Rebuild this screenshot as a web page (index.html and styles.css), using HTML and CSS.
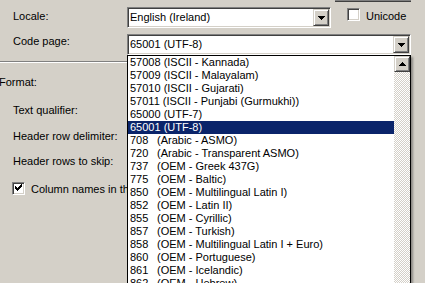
FILE: index.html
```html
<!DOCTYPE html>
<html lang="en">
<head>
  <meta charset="UTF-8">
  <title>Flat File Source Editor</title>
  <link rel="stylesheet" href="styles.css">
</head>
<body>
  <div class="btn-edge"></div>

  <div class="row row-locale">
    <div class="label label-locale">Locale:</div>
    <div class="combo combo-locale">
      <div class="combo-text">English (Ireland)</div>
      <div class="raised combo-btn">
        <svg width="7" height="4" viewBox="0 0 7 4" shape-rendering="crispEdges"><path d="M0 0h7v1h-1v1h-1v1h-1v1h-1v-1h-1v-1h-1v-1h-1z"/></svg>
      </div>
    </div>
    <div class="check-group">
      <div class="checkbox"></div>
      <div class="check-label">Unicode</div>
    </div>
  </div>

  <div class="row row-code">
    <div class="label label-code">Code page:</div>
    <div class="combo combo-code">
      <div class="combo-text">65001 (UTF-8)</div>
      <div class="raised combo-btn">
        <svg width="7" height="4" viewBox="0 0 7 4" shape-rendering="crispEdges"><path d="M0 0h7v1h-1v1h-1v1h-1v1h-1v-1h-1v-1h-1v-1h-1z"/></svg>
      </div>
    </div>
  </div>

  <div class="separator"></div>

  <div class="format-title">Format:</div>
  <div class="field-label fl-qualifier">Text qualifier:</div>
  <div class="field-label fl-delim">Header row delimiter:</div>
  <div class="field-label fl-skip">Header rows to skip:</div>

  <div class="row row-colnames">
    <div class="checkbox">
      <svg width="9" height="9" viewBox="0 0 9 9" shape-rendering="crispEdges"><path d="M1 2h1v3h-1zM2 3h1v3h-1zM3 4h1v3h-1zM4 3h1v3h-1zM5 2h1v3h-1zM6 1h1v3h-1zM7 0h1v3h-1z"/></svg>
    </div>
    <div class="check-label">Column names in the first data row</div>
  </div>

  <!-- open drop-down of the code page combo -->
  <div class="dropdown-list">
    <div class="options">
      <div class="opt">57008 (ISCII - Kannada)</div>
      <div class="opt">57009 (ISCII - Malayalam)</div>
      <div class="opt">57010 (ISCII - Gujarati)</div>
      <div class="opt">57011 (ISCII - Punjabi (Gurmukhi))</div>
      <div class="opt">65000 (UTF-7)</div>
      <div class="opt sel">65001 (UTF-8)</div>
      <div class="opt"><span class="code">708</span>(Arabic - ASMO)</div>
      <div class="opt"><span class="code">720</span>(Arabic - Transparent ASMO)</div>
      <div class="opt"><span class="code">737</span>(OEM - Greek 437G)</div>
      <div class="opt"><span class="code">775</span>(OEM - Baltic)</div>
      <div class="opt"><span class="code">850</span>(OEM - Multilingual Latin I)</div>
      <div class="opt"><span class="code">852</span>(OEM - Latin II)</div>
      <div class="opt"><span class="code">855</span>(OEM - Cyrillic)</div>
      <div class="opt"><span class="code">857</span>(OEM - Turkish)</div>
      <div class="opt"><span class="code">858</span>(OEM - Multilingual Latin I + Euro)</div>
      <div class="opt"><span class="code">860</span>(OEM - Portuguese)</div>
      <div class="opt"><span class="code">861</span>(OEM - Icelandic)</div>
      <div class="opt"><span class="code">862</span>(OEM - Hebrew)</div>
    </div>
    <div class="scrollbar">
      <div class="raised scroll-btn">
        <svg width="7" height="4" viewBox="0 0 7 4" shape-rendering="crispEdges"><path d="M3 0h1v1h1v1h1v1h1v1h-7v-1h1v-1h1v-1h1z"/></svg>
      </div>
    </div>
  </div>
</body>
</html>
```

FILE: styles.css
```css
body {
  margin: 0;
  width: 425px;
  height: 283px;
  overflow: hidden;
  position: relative;
  background: #d4d0c8;
  font-family: "Liberation Sans", Arial, sans-serif;
  font-size: 11px;
  line-height: 13px;
  color: #000;
}

/* bottom of a button cut off by the top edge */
.btn-edge {
  margin-left: 335px;
  width: 76px;
  height: 1px;
  background: #808080;
  border-bottom: 1px solid #404040;
}

.row {
  display: flex;
  align-items: flex-start;
}

.row-locale {
  margin-top: 5px;
}

.row-code {
  margin-top: 6px;
}

.label {
  width: 114px;
  padding-left: 13px;
}

.label-locale {
  padding-top: 3px;
}

.label-code {
  padding-top: 1px;
}

/* sunken field */
.combo {
  box-sizing: border-box;
  height: 21px;
  padding: 1px;
  display: flex;
  background: #fff;
  border: 1px solid;
  border-color: #808080 #fff #fff #808080;
  box-shadow: inset 1px 1px #404040, inset -1px -1px #d4d0c8;
}

.combo-locale {
  width: 204px;
}

.combo-code {
  width: 284px;
}

.combo-text {
  flex: 1;
  padding: 2px 0 0 1px;
}

/* raised button */
.raised {
  box-sizing: border-box;
  background: #d4d0c8;
  border: 1px solid;
  border-color: #d4d0c8 #404040 #404040 #d4d0c8;
  box-shadow: inset 1px 1px #fff, inset -1px -1px #808080;
  display: flex;
  align-items: center;
  justify-content: center;
}

.combo-btn {
  width: 16px;
  height: 17px;
}

.check-group {
  display: flex;
  align-items: flex-start;
  margin-left: 16px;
}

.checkbox {
  box-sizing: border-box;
  width: 13px;
  height: 13px;
  margin-top: 1px;
  background: #fff;
  border: 1px solid;
  border-color: #808080 #fff #fff #808080;
  box-shadow: inset 1px 1px #404040, inset -1px -1px #d4d0c8;
  display: flex;
  align-items: center;
  justify-content: center;
}

.check-label {
  margin-left: 6px;
  padding-top: 3px;
  white-space: nowrap;
}

.separator {
  margin-top: 6px;
  width: 127px;
  height: 1px;
  background: #808080;
  border-bottom: 1px solid #fff;
}

.format-title {
  margin-top: 13px;
  margin-left: -1px;
}

.field-label {
  padding-left: 13px;
}

.fl-qualifier {
  margin-top: 15px;
}

.fl-delim {
  margin-top: 13px;
}

.fl-skip {
  margin-top: 12px;
}

.row-colnames {
  margin-top: 13px;
  padding-left: 12px;
}

.row-colnames .check-label {
  padding-top: 2px;
}

/* drop-down list lies over the form */
.dropdown-list {
  position: absolute;
  left: 127px;
  top: 55px;
  width: 284px;
  height: 260px;
  box-sizing: border-box;
  display: flex;
  background: #fff;
  border: 1px solid #000;
  box-shadow: 2px 2px 2px rgba(0, 0, 0, 0.35);
}

.options {
  flex: 1;
}

.opt {
  height: 13px;
  padding-left: 2px;
  white-space: nowrap;
}

.opt.sel {
  background: #0a246a;
  color: #fff;
}

.code {
  display: inline-block;
  width: 27px;
}

.scrollbar {
  width: 16px;
  background: repeating-conic-gradient(#d4d0c8 0 25%, #fff 0 50%) 0 0 / 2px 2px;
}

.scroll-btn {
  width: 16px;
  height: 16px;
}
```
